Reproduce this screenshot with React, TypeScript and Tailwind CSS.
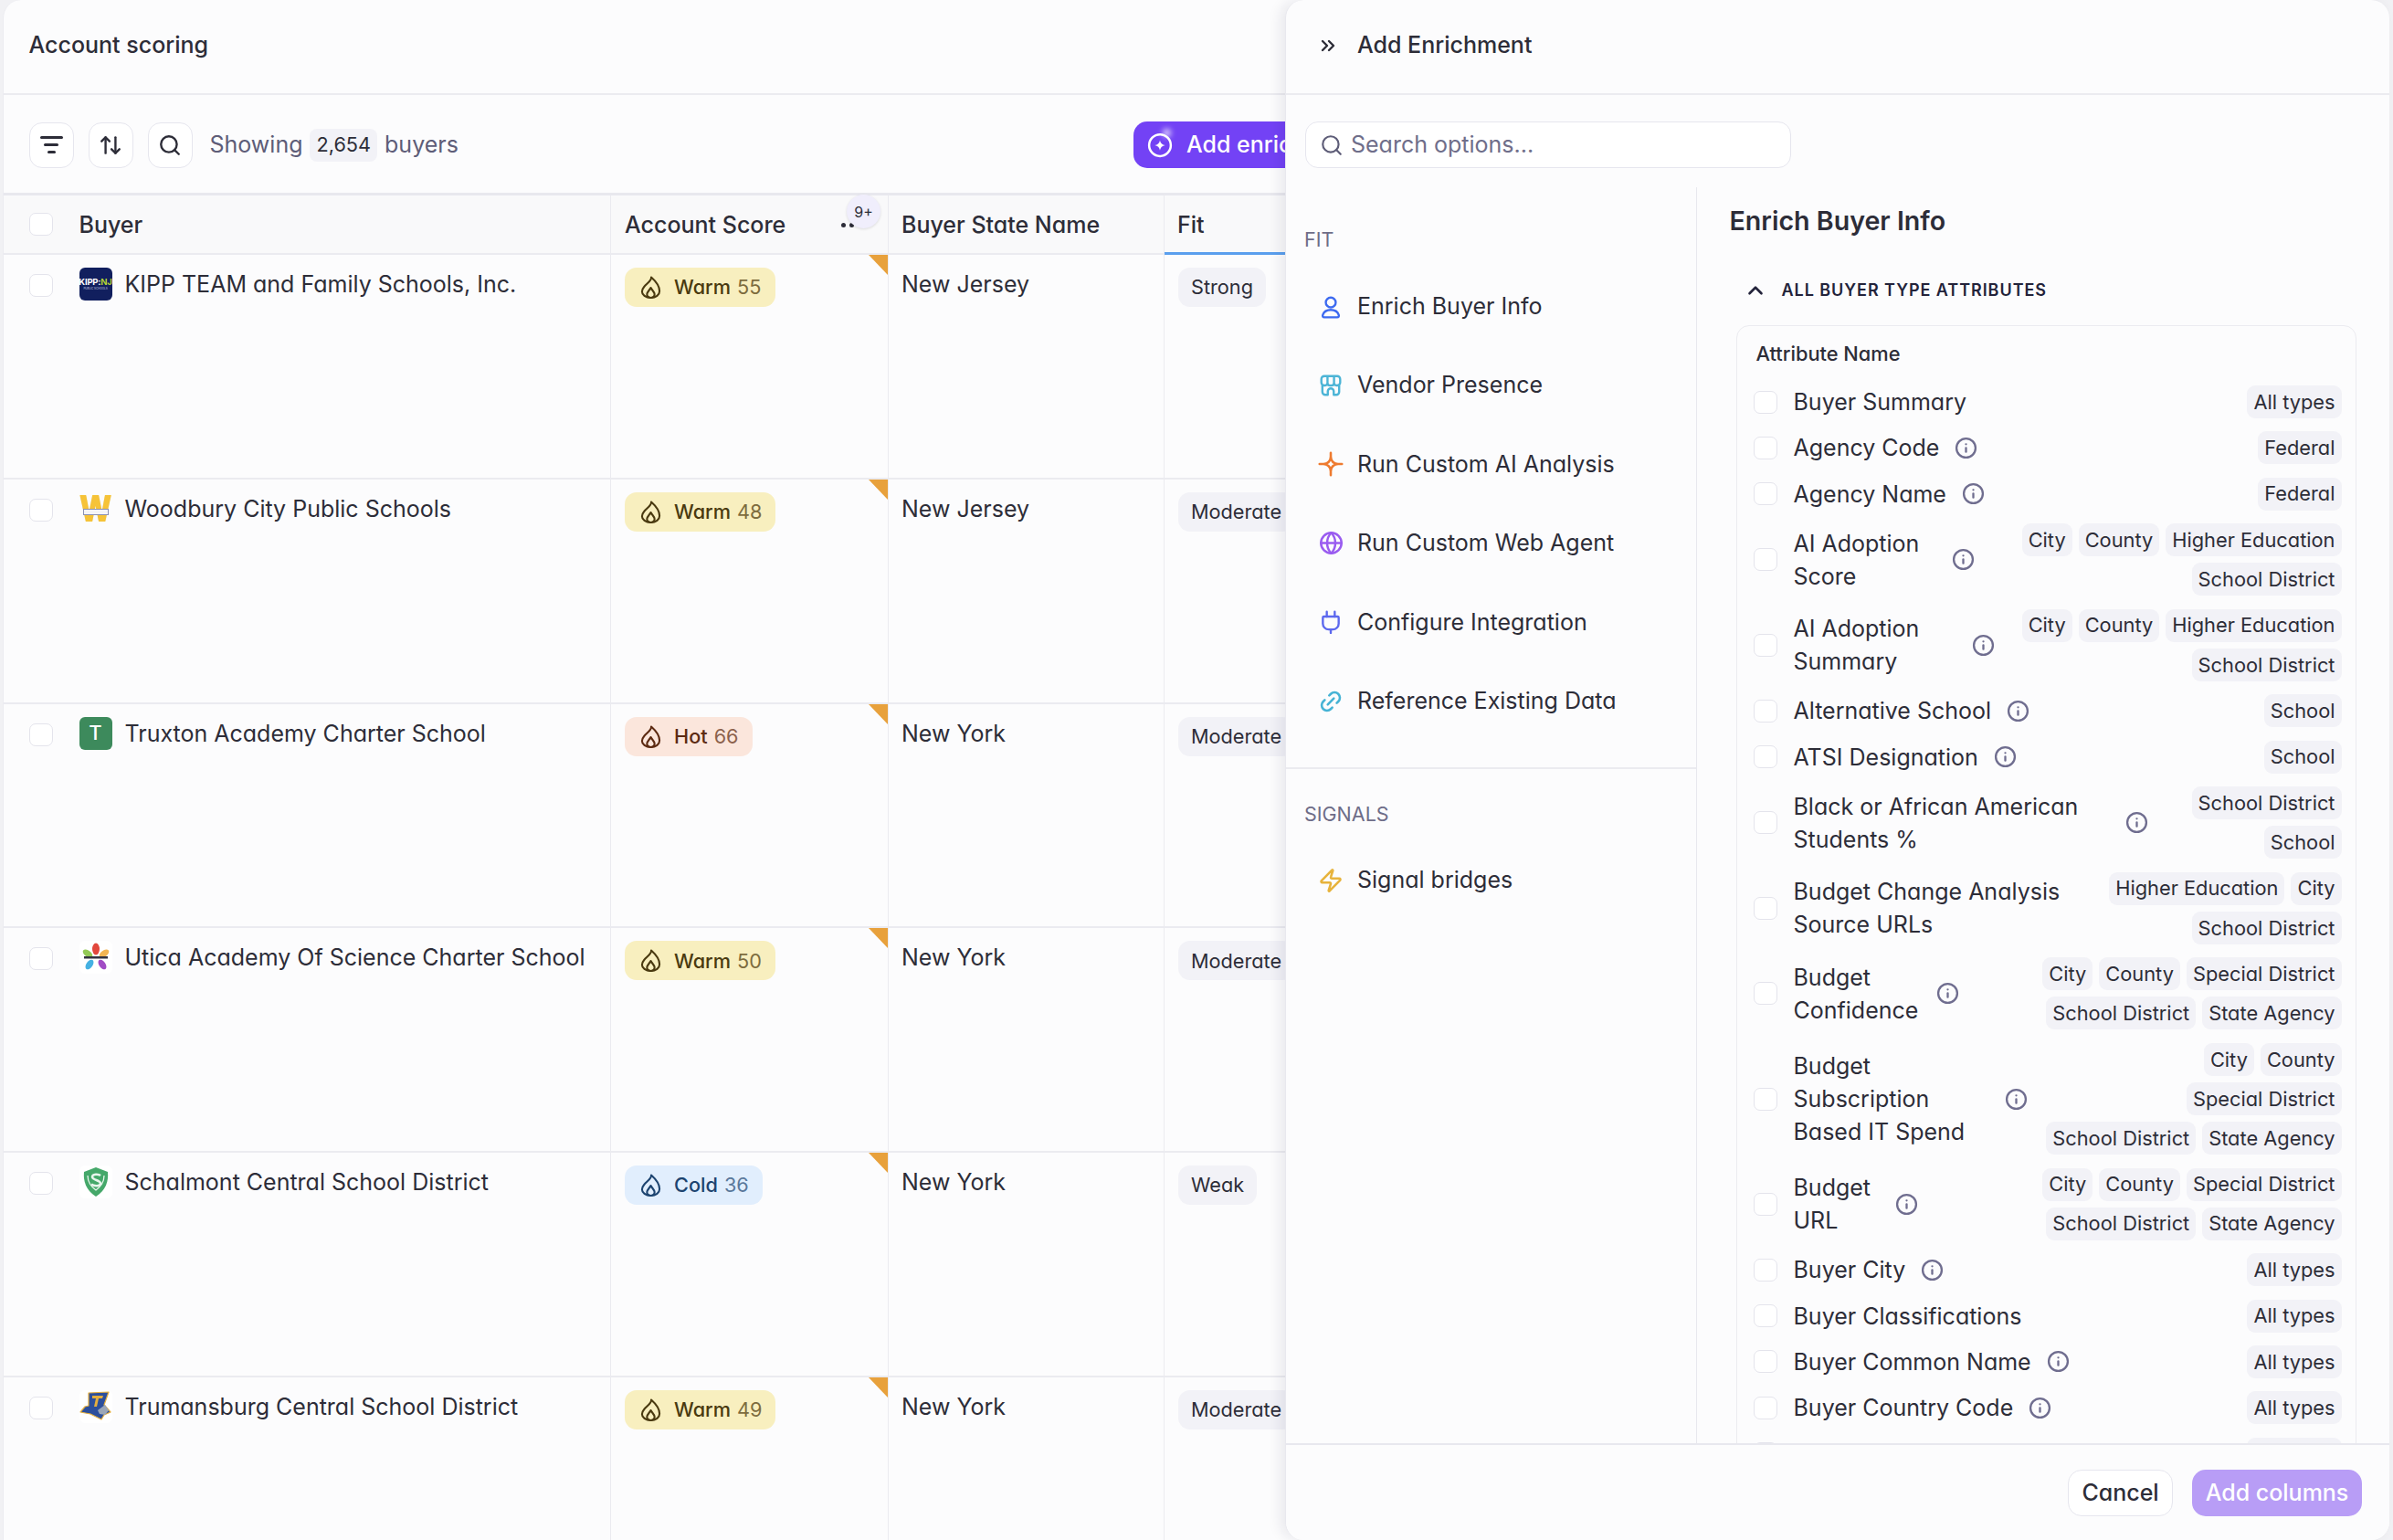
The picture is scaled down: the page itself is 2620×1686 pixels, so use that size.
import React from "react";
import { ArrowUpDown, ChevronUp, ChevronsRight, Globe, Info, Link2, Search, Zap } from "lucide-react";

type Heat = "Warm" | "Hot" | "Cold";

interface Buyer {
  name: string;
  logo: React.ReactNode;
  heat: Heat;
  score: number;
  state: string;
  fit: string;
}

const heatStyles: Record<Heat, { box: string; label: string; num: string }> = {
  Warm: { box: "bg-[#f8efbf] w-[165px]", label: "text-[#4a3a10]", num: "text-[#7d6c3e]" },
  Hot: { box: "bg-[#fbe6dc] w-[140px]", label: "text-[#5c2a12]", num: "text-[#8c624c]" },
  Cold: { box: "bg-[#e1eefd] w-[151px]", label: "text-[#1d4470]", num: "text-[#5a789b]" },
};

function Flame() {
  return (
    <svg viewBox="0 0 24 24" className="w-[25px] h-[25px]" fill="none" stroke="currentColor" strokeWidth="2" strokeLinejoin="round">
      <path d="M12.500 1.500C13 5 8 8 5 11.500 3.200 13.600 2.800 15 2.800 16.500 2.800 20 6.500 23 12 23s9.200-3 9.200-7C21.200 10.500 17 5.500 12.500 1.500z" />
      <path d="M12 23c-2.500 0-4-1.700-4-3.700 0-2.300 2.500-3.800 4-6.800 1.500 3 4 4.500 4 6.800 0 2-1.500 3.700-4 3.700z" />
    </svg>
  );
}

function Check() {
  return <span className="block w-[26px] h-[25px] shrink-0 rounded-[7px] border border-[#e4e4ec] bg-white" />;
}

function KippLogo() {
  return (
    <div className="w-[36px] h-[36px] rounded-[6px] bg-[#111f5e] flex flex-col items-center justify-center leading-none">
      <span className="text-[9.5px] font-bold tracking-[-0.2px]">
        <span className="text-white">KIPP:</span>
        <span className="text-[#b5d334]">NJ</span>
      </span>
      <span className="text-[3px] text-[#c9cde0] mt-[1px]">PUBLIC SCHOOLS</span>
    </div>
  );
}

function WoodburyLogo() {
  return (
    <div className="relative w-[36px] h-[36px] flex items-center justify-center">
      <span className="text-[31px] leading-none font-bold text-[#f6c338] scale-x-110 scale-y-125 [font-family:'Liberation_Sans',sans-serif] [-webkit-text-stroke:1.6px_#f6c338] [text-shadow:0_0_1px_#7d84ab]">W</span>
      <span className="absolute left-[4px] right-[4px] top-[18px] h-[7px] bg-[#f4f4f8] border border-[#8a90b4]" />
    </div>
  );
}

function TruxtonLogo() {
  return (
    <div className="w-[36px] h-[36px] rounded-[6px] bg-[#3d8a5c] flex items-center justify-center text-white text-[22px] font-medium">T</div>
  );
}

function UticaLogo() {
  return (
    <div className="w-[36px] h-[36px] rounded-[6px] bg-white flex items-center justify-center">
      <svg viewBox="0 0 36 36" className="w-[36px] h-[36px]">
        <ellipse cx="18" cy="9" rx="4" ry="6.500" fill="#e2473c" />
        <ellipse cx="9" cy="14" rx="3.500" ry="6" fill="#93c956" transform="rotate(-55 9 14)" />
        <ellipse cx="27" cy="14" rx="3.500" ry="6" fill="#f2b552" transform="rotate(55 27 14)" />
        <ellipse cx="11" cy="26" rx="3.500" ry="6" fill="#45b1e2" transform="rotate(35 11 26)" />
        <ellipse cx="25" cy="26" rx="3.500" ry="6" fill="#a14cc4" transform="rotate(-35 25 26)" />
        <rect x="5" y="17" width="26" height="2.500" fill="#333340" />
      </svg>
    </div>
  );
}

function SchalmontLogo() {
  return (
    <div className="w-[36px] h-[36px] rounded-[6px] bg-white flex items-center justify-center">
      <svg viewBox="0 0 36 36" className="w-[36px] h-[36px]">
        <path d="M18 2l13 5c1 10-2 20-13 27C7 27 4 17 5 7z" fill="#45a86a" />
        <path d="M23 11c-2-2-9-2-9 1.500s9 3.500 9 7-7 3.500-10 1" fill="none" stroke="#e8f5ec" strokeWidth="2.500" />
        <path d="M9 11c0 8 4 12 9 16 5-4 9-8 9-16" fill="none" stroke="#e8f5ec" strokeWidth="1.300" />
      </svg>
    </div>
  );
}

function TrumansburgLogo() {
  return (
    <div className="w-[36px] h-[36px] rounded-[6px] bg-white flex items-center justify-center">
      <svg viewBox="0 0 36 36" className="w-[36px] h-[36px]">
        <path d="M10 3l22-1-5 14 7 8-7 3-3 5-12-6-11-2 5-6 4-1z" fill="#2c4f9c" stroke="#e4ae3e" strokeWidth="1.200" strokeLinejoin="round" />
        <path d="M14 6h12l-1 3h-4l-2 9h-3l2-9h-4z" fill="#e4ae3e" />
        <path d="M20 22l8-6 4 6-4 5-6-1z" fill="#9aa6b8" />
      </svg>
    </div>
  );
}

const buyers: Buyer[] = [
  { name: "KIPP TEAM and Family Schools, Inc.", logo: <KippLogo />, heat: "Warm", score: 55, state: "New Jersey", fit: "Strong" },
  { name: "Woodbury City Public Schools", logo: <WoodburyLogo />, heat: "Warm", score: 48, state: "New Jersey", fit: "Moderate" },
  { name: "Truxton Academy Charter School", logo: <TruxtonLogo />, heat: "Hot", score: 66, state: "New York", fit: "Moderate" },
  { name: "Utica Academy Of Science Charter School", logo: <UticaLogo />, heat: "Warm", score: 50, state: "New York", fit: "Moderate" },
  { name: "Schalmont Central School District", logo: <SchalmontLogo />, heat: "Cold", score: 36, state: "New York", fit: "Weak" },
  { name: "Trumansburg Central School District", logo: <TrumansburgLogo />, heat: "Warm", score: 49, state: "New York", fit: "Moderate" },
];

interface Attr {
  label: string;
  width?: string;
  info?: boolean;
  tags: string[][];
}

const allTypes = [["All types"]];
const four = [["City", "County", "Higher Education"], ["School District"]];
const five = [["City", "County", "Special District"], ["School District", "State Agency"]];

const attrs: Attr[] = [
  { label: "Buyer Summary", tags: allTypes },
  { label: "Agency Code", info: true, tags: [["Federal"]] },
  { label: "Agency Name", info: true, tags: [["Federal"]] },
  { label: "AI Adoption Score", width: "w-[156px]", info: true, tags: four },
  { label: "AI Adoption Summary", width: "w-[178px]", info: true, tags: four },
  { label: "Alternative School", info: true, tags: [["School"]] },
  { label: "ATSI Designation", info: true, tags: [["School"]] },
  { label: "Black or African American Students %", width: "w-[346px]", info: true, tags: [["School District"], ["School"]] },
  { label: "Budget Change Analysis Source URLs", width: "w-[310px]", tags: [["Higher Education", "City"], ["School District"]] },
  { label: "Budget Confidence", width: "w-[139px]", info: true, tags: five },
  { label: "Budget Subscription Based IT Spend", width: "w-[214px]", info: true, tags: [["City", "County"], ["Special District"], ["School District", "State Agency"]] },
  { label: "Budget URL", width: "w-[94px]", info: true, tags: five },
  { label: "Buyer City", info: true, tags: allTypes },
  { label: "Buyer Classifications", tags: allTypes },
  { label: "Buyer Common Name", info: true, tags: allTypes },
  { label: "Buyer Country Code", info: true, tags: allTypes },
  { label: "Buyer County", info: true, tags: allTypes },
];

function BuyerRow({ buyer }: { buyer: Buyer }) {
  const s = heatStyles[buyer.heat];
  return (
    <div className="flex h-[245.8px] shrink-0 border-b-2 border-[#ebebf0]">
      <div className="w-[665px] shrink-0 border-r border-[#ebebf0] pl-[27.5px] flex items-start">
        <div className="mt-[21px]"><Check /></div>
        <div className="ml-[29px] mt-[14px]">{buyer.logo}</div>
        <span className="ml-[14px] mt-[14px] text-[25px] leading-[36px]">{buyer.name}</span>
      </div>
      <div className="relative w-[304px] shrink-0 border-r border-[#ebebf0] pl-[15px] pt-[14px]">
        <div className={`h-[43px] rounded-[13px] flex items-center pl-[16px] gap-[13px] text-[21.7px] ${s.box}`}>
          <span className={s.label}><Flame /></span>
          <span className="flex gap-[7px] font-medium">
            <span className={s.label}>{buyer.heat}</span>
            <span className={`font-normal ${s.num}`}>{buyer.score}</span>
          </span>
        </div>
        <span className="absolute top-0 right-0 border-t-[22px] border-l-[21px] border-t-[#e8a13c] border-l-transparent" />
      </div>
      <div className="w-[302px] shrink-0 border-r border-[#ebebf0] pl-[14px] pt-[14px] text-[25px] leading-[36px]">{buyer.state}</div>
      <div className="flex-1 pl-[15px] pt-[14px]">
        <span className="inline-flex h-[43px] items-center rounded-[13px] bg-[#f2f2f7] px-[14px] text-[21.7px]">{buyer.fit}</span>
      </div>
    </div>
  );
}

function UserIcon() {
  return (
    <svg viewBox="0 0 24 24" className="w-[26px] h-[30px]" fill="none" stroke="#3d6af0" strokeWidth="2.200" strokeLinejoin="round">
      <circle cx="12" cy="7.500" r="5" />
      <path d="M5.500 22.500c-1.500 0-2-1-1.500-2.500 1-3 4-5 8-5s7 2 8 5c.5 1.500 0 2.500-1.500 2.500z" />
    </svg>
  );
}

function StoreIcon() {
  return (
    <svg viewBox="0 0 24 24" className="w-[26px] h-[26px]" fill="none" stroke="#4cb4d6" strokeWidth="2.200" strokeLinejoin="round">
      <path d="M2.500 9V5.500a3 3 0 0 1 3-3h13a3 3 0 0 1 3 3V9a3 3 0 0 1-3 3 3 3 0 0 1-3.200-1.600A3 3 0 0 1 12 12a3 3 0 0 1-3.300-1.600A3 3 0 0 1 5.500 12a3 3 0 0 1-3-3z" />
      <path d="M8.700 2.500v8M15.300 2.500v8" />
      <path d="M3.500 12v6.500a3 3 0 0 0 3 3H9V18a3 3 0 0 1 6 0v3.500h2.500a3 3 0 0 0 3-3V12" />
    </svg>
  );
}

function SparkIcon() {
  return (
    <svg viewBox="0 0 24 24" className="w-[28px] h-[28px]" fill="none" stroke="#ee7b30" strokeWidth="2.200" strokeLinejoin="round" strokeLinecap="round">
      <path d="M12 1.500v4.500M12 18v4.500M1.500 12H6M18 12h4.500" />
      <path d="M12 6c.6 3.400 2.600 5.400 6 6-3.400.6-5.400 2.600-6 6-.6-3.400-2.600-5.400-6-6 3.400-.6 5.400-2.600 6-6z" />
    </svg>
  );
}

function PlugIcon() {
  return (
    <svg viewBox="0 0 24 24" className="w-[26px] h-[30px]" fill="none" stroke="#5c68ee" strokeWidth="2.200" strokeLinecap="round" strokeLinejoin="round">
      <path d="M8 1.500v5M16 1.500v5M12 19.500v3.500" />
      <path d="M5 6.500h14a1 1 0 0 1 1 1v6a6 6 0 0 1-6 6h-4a6 6 0 0 1-6-6v-6a1 1 0 0 1 1-1z" />
    </svg>
  );
}

function MenuItem({ icon, label }: { icon: React.ReactNode; label: string }) {
  return (
    <div className="flex items-center h-[86.4px]">
      <span className="w-[58px] flex justify-center shrink-0">{icon}</span>
      <span className="text-[25px]">{label}</span>
    </div>
  );
}

function AttrRow({ attr }: { attr: Attr }) {
  return (
    <div className="flex items-center shrink-0">
      <Check />
      <span className={`ml-[18px] text-[25px] leading-[36px] ${attr.width ?? "whitespace-nowrap"}`}>{attr.label}</span>
      {attr.info && <Info className="ml-[17px] shrink-0 text-[#6f6d8f]" size={25} strokeWidth={2.200} />}
      <div className="ml-auto flex flex-col items-end gap-y-[7.2px]">
        {attr.tags.map((line, i) => (
          <div key={i} className="flex gap-x-[7px]">
            {line.map((t) => (
              <span key={t} className="h-[36px] px-[7px] rounded-[9px] bg-[#f2f2f7] flex items-center text-[21.8px] whitespace-nowrap">{t}</span>
            ))}
          </div>
        ))}
      </div>
    </div>
  );
}

export default function App() {
  return (
    <div className="relative w-[2620px] h-[1686px] overflow-hidden bg-[#f1f1f4] text-[#2d2d38] [font-family:Inter,'Liberation_Sans',sans-serif] [font-feature-settings:'cv11']">
      {/* Account scoring table */}
      <div className="ml-[3px] w-[2300px] h-[1686px] flex flex-col bg-[#fcfcfd] rounded-tl-[20px] overflow-hidden border-l border-[#ececf1]">
        <div className="h-[104px] shrink-0 border-b-2 border-[#ebebf0] pl-[27.5px] pb-[3px] flex items-center text-[25px] font-medium">Account scoring</div>
        <div className="w-[1527px] h-[107px] shrink-0 pl-[27.5px] pt-[2px] flex items-center">
          <div className="flex gap-[16px]">
            <button className="w-[49px] h-[50px] rounded-[14px] border border-[#e6e6ee] bg-white flex flex-col items-center justify-center gap-[5px]">
              <span className="block w-[25px] h-[3px] rounded bg-[#2d2d38]" />
              <span className="block w-[16px] h-[3px] rounded bg-[#2d2d38]" />
              <span className="block w-[9px] h-[3px] rounded bg-[#2d2d38]" />
            </button>
            <button className="w-[49px] h-[50px] rounded-[14px] border border-[#e6e6ee] bg-white flex items-center justify-center">
              <ArrowUpDown size={26} strokeWidth={2.200} />
            </button>
            <button className="w-[49px] h-[50px] rounded-[14px] border border-[#e6e6ee] bg-white flex items-center justify-center">
              <Search size={26} strokeWidth={2.200} />
            </button>
          </div>
          <div className="ml-[19px] flex items-center text-[25px] text-[#5e5d78]">
            Showing
            <span className="mx-[8px] h-[36px] px-[7px] rounded-[8px] bg-[#f2f2f7] flex items-center text-[21.7px] text-[#2d2d38]">2,654</span>
            buyers
          </div>
          <button className="ml-auto h-[51px] w-[290px] shrink-0 rounded-[15px] bg-[#7342f5] flex items-center pl-[14px] gap-[14px] text-white text-[25px] font-medium">
            <span className="relative block w-[30px] h-[30px]">
              <svg viewBox="0 0 24 24" className="w-[30px] h-[30px]" fill="none" stroke="white" strokeWidth="2">
                <circle cx="12" cy="12" r="9.500" />
                <path d="M12 7.500c.4 2.500 2 4.100 4.500 4.500-2.500.4-4.100 2-4.500 4.500-.4-2.500-2-4.100-4.500-4.500 2.500-.4 4.100-2 4.500-4.500z" fill="white" stroke="none" />
              </svg>
              <span className="absolute -top-[3px] right-[3px] w-[9px] h-[9px] rounded-full bg-white/80 blur-[3px]" />
            </span>
            Add enrichment
          </button>
        </div>
        <div className="flex h-[68px] shrink-0 bg-[#f9f9fa] border-t-[3px] border-b-2 border-t-[#e8e8ee] border-b-[#ebebf0] text-[25px] font-medium">
          <div className="w-[665px] shrink-0 border-r border-[#ebebf0] pl-[27.5px] flex items-center">
            <Check />
            <span className="ml-[29px] pt-[2px]">Buyer</span>
          </div>
          <div className="relative w-[304px] shrink-0 border-r border-[#ebebf0] pl-[15px] pt-[2px] flex items-center">
            Account Score
            <span className="absolute left-[252px] top-[30px] w-[5px] h-[5px] rounded-full bg-[#2d2d38]" />
            <span className="absolute left-[261px] top-[30px] w-[5px] h-[5px] rounded-full bg-[#2d2d38]" />
            <span className="absolute left-[258px] -top-[1px] w-[37px] h-[37px] rounded-full bg-[#f0eefc] shadow-[0_1px_3px_rgba(0,0,0,0.12)] flex items-center justify-center text-[16px] font-normal">9+</span>
          </div>
          <div className="w-[302px] shrink-0 border-r border-[#ebebf0] pl-[14px] pt-[2px] flex items-center">Buyer State Name</div>
          <div className="relative flex-1 pl-[14px] pt-[2px] flex items-center">
            Fit
            <span className="absolute left-0 right-0 -bottom-[2px] h-[3px] bg-[#5a9fee]" />
          </div>
        </div>
        {buyers.map((b) => (
          <BuyerRow key={b.name} buyer={b} />
        ))}
      </div>

      {/* Add Enrichment drawer, sits over the table */}
      <div className="absolute left-[1407px] top-0 w-[1209px] h-[1686px] flex flex-col bg-[#fcfcfd] rounded-[20px] overflow-hidden border-l border-[#e8e8ee] shadow-[-6px_0_14px_rgba(30,30,60,0.08)]">
        <div className="h-[104px] shrink-0 border-b-2 border-[#ebebf0] pb-[3px] flex items-center">
          <span className="w-[78px] flex justify-center pl-[13px]"><ChevronsRight size={24} strokeWidth={2.400} /></span>
          <span className="text-[25px] font-medium">Add Enrichment</span>
        </div>
        <div className="h-[101px] shrink-0 pl-[21px] pt-[29px] flex items-start">
          <div className="w-[532px] h-[51px] rounded-[14px] border border-[#e6e6ee] bg-white flex items-center pl-[15px] gap-[8px] text-[25px] text-[#6f6e8a]">
            <Search size={26} strokeWidth={2} className="text-[#5e5d78]" />
            Search options...
          </div>
        </div>
        <div className="flex-1 min-h-0 flex">
          <div className="w-[450px] shrink-0 border-r border-[#e8e8ee] flex flex-col">
            <div className="pl-[20px] mt-[43px] text-[21.5px] leading-[28px] text-[#6e6d88]">FIT</div>
            <div className="mt-[16.5px] flex flex-col pb-[29px] border-b-2 border-[#ebebf0] pl-[20px]">
              <MenuItem icon={<UserIcon />} label="Enrich Buyer Info" />
              <MenuItem icon={<StoreIcon />} label="Vendor Presence" />
              <MenuItem icon={<SparkIcon />} label="Run Custom AI Analysis" />
              <MenuItem icon={<Globe size={27} strokeWidth={2.200} className="text-[#9a5cf0]" />} label="Run Custom Web Agent" />
              <MenuItem icon={<PlugIcon />} label="Configure Integration" />
              <MenuItem icon={<Link2 size={28} strokeWidth={2.200} className="text-[#46b3d5] -rotate-45" />} label="Reference Existing Data" />
            </div>
            <div className="pl-[20px] mt-[35px] text-[21.5px] leading-[28px] text-[#6e6d88]">SIGNALS</div>
            <div className="pl-[20px] mt-[16px]">
              <MenuItem icon={<Zap size={28} strokeWidth={2.200} className="text-[#e7b33c]" />} label="Signal bridges" />
            </div>
          </div>
          <div className="flex-1 min-w-0 flex flex-col pl-[35.5px] pr-[36.5px] overflow-hidden">
            <div className="mt-[16px] text-[28.6px] leading-[42px] font-semibold">Enrich Buyer Info</div>
            <div className="mt-[41.5px] ml-[15px] flex items-center gap-[16px] text-[18px] leading-[24px] font-semibold tracking-[0.95px] text-[#23233a]">
              <ChevronUp size={26} strokeWidth={2.400} />
              ALL BUYER TYPE ATTRIBUTES
            </div>
            <div className="mt-[25.5px] ml-[7px] flex-1 rounded-t-[14px] border border-[#ebebf0] pl-[18px] pr-[15px] pt-[15px]">
              <div className="ml-[3px] text-[21.8px] leading-[30px] font-medium">Attribute Name</div>
              <div className="mt-[20px] flex flex-col gap-y-[14.4px]">
                {attrs.map((a) => (
                  <AttrRow key={a.label} attr={a} />
                ))}
              </div>
            </div>
          </div>
        </div>
        <div className="h-[106px] shrink-0 border-t-2 border-[#e8e8ee] bg-[#fcfcfd] pt-[1px] flex items-center justify-end gap-[21px] pr-[30px]">
          <button className="w-[115px] h-[51px] rounded-[15px] border border-[#e6e6ee] bg-white text-[25px] font-medium">Cancel</button>
          <button className="w-[186px] h-[51px] rounded-[15px] bg-[#b89df6] text-white text-[25px] font-medium">Add columns</button>
        </div>
      </div>
    </div>
  );
}
